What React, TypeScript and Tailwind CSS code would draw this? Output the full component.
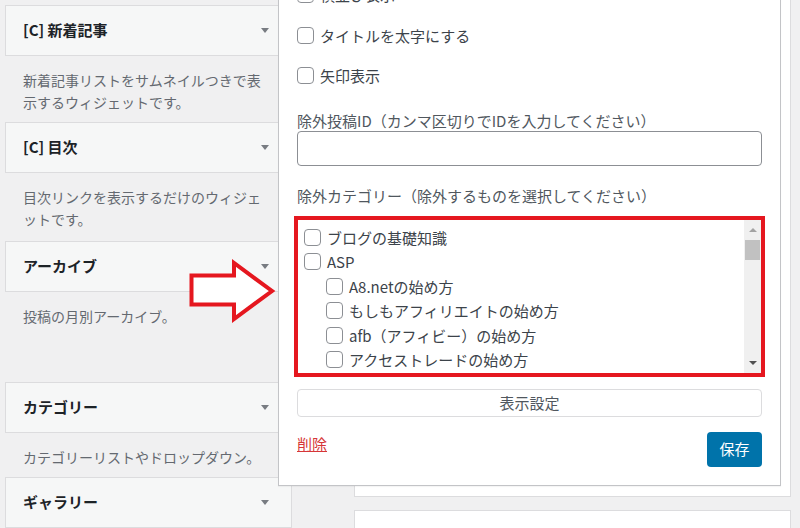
import React from 'react';

// Left column widgets (legacy widget screen)
const WIDGETS = [
    { title: '[C] 新着記事', desc: ['新着記事リストをサムネイルつきで表', '示するウィジェットです。'], descH: 'h-[66px]' },
    { title: '[C] 目次', desc: ['目次リンクを表示するだけのウィジェ', 'ットです。'], descH: 'h-[68px]' },
    { title: 'アーカイブ', desc: ['投稿の月別アーカイブ。'], descH: 'h-[90px]' },
    { title: 'カテゴリー', desc: ['カテゴリーリストやドロップダウン。'], descH: 'h-[44px]' },
    { title: 'ギャラリー', desc: [], descH: 'h-0' },
];

const CATEGORIES = [
    { label: 'ブログの基礎知識', depth: 0 },
    { label: 'ASP', depth: 0 },
    { label: 'A8.netの始め方', depth: 1 },
    { label: 'もしもアフィリエイトの始め方', depth: 1 },
    { label: 'afb（アフィビー）の始め方', depth: 1 },
    { label: 'アクセストレードの始め方', depth: 1 },
];

const Check = () => (
    <span className="inline-block w-[17px] h-[17px] shrink-0 rounded-[4px] border border-[#8c8f94] bg-white" />
);

const CheckRow = ({ label, className = '' }: { label: string; className?: string }) => (
    <div className={`flex items-center gap-[6px] h-[22px] ${className}`}>
        <Check />
        <span className="text-[15px] text-[#3c434a] leading-none">{label}</span>
    </div>
);

export default function App() {
    return (
        <div
            className="relative w-[800px] h-[528px] overflow-hidden bg-[#f0f0f1]"
            style={{ fontFamily: '"Noto Sans CJK JP", "Noto Sans", sans-serif' }}
        >
            <div className="flex">
                {/* Available widgets */}
                <div className="ml-[5px] mt-[5px] w-[287px] shrink-0">
                    {WIDGETS.map((w) => (
                        <div key={w.title}>
                            <div className="h-[51px] flex items-center justify-between pl-[17px] pr-[22px] bg-[#f6f7f7] border border-[#dcdcde]">
                                <span className="text-[15px] font-semibold text-[#1d2327]">{w.title}</span>
                                <span className="w-0 h-0 border-x-[4px] border-t-[5px] border-x-transparent border-t-[#787c82]" />
                            </div>
                            <div className={`${w.descH} pl-[18px] pt-[13px] text-[14px] leading-[22px] text-[#646970]`}>
                                {w.desc.map((line) => (
                                    <div key={line}>{line}</div>
                                ))}
                            </div>
                        </div>
                    ))}
                </div>

                {/* Sidebar areas */}
                <div className="ml-[62px] w-[437px] shrink-0">
                    <div className="-mt-px h-[498px] bg-white border border-[#dcdcde]" />
                    <div className="mt-[13px] h-[40px] bg-white border border-[#dcdcde]" />
                </div>
            </div>

            {/* Opened widget settings */}
            <div className="absolute left-[278px] -top-px w-[503px] h-[487px] bg-white border border-[#c3c4c7] shadow-[0_1px_1px_rgba(0,0,0,0.04)] px-[18px]">
                <div className="-mt-[17px]">
                    <CheckRow label="横並び表示" />
                    <CheckRow label="タイトルを太字にする" className="mt-[19px]" />
                    <CheckRow label="矢印表示" className="mt-[18px]" />

                    <div className="mt-[25px] h-[20px] flex items-center text-[15px] text-[#50575e]">
                        除外投稿ID（カンマ区切りでIDを入力してください）
                    </div>
                    <div className="h-[35px] rounded-[4px] border border-[#8c8f94] bg-white" />

                    <div className="mt-[20px] h-[20px] flex items-center text-[15px] text-[#50575e]">
                        除外カテゴリー（除外するものを選択してください）
                    </div>

                    {/* Category checklist, marked up with a red frame */}
                    <div className="mt-[10px] -mx-[3px] h-[161px] border-4 border-[#e5171f] flex bg-white">
                        <div className="flex-1 overflow-hidden pl-[6px] pt-[5px]">
                            {CATEGORIES.map((c) => (
                                <div
                                    key={c.label}
                                    className={`flex items-center gap-[6px] h-[24.5px] ${c.depth ? 'pl-[22px]' : ''}`}
                                >
                                    <Check />
                                    <span className="text-[15px] text-[#3c434a] leading-none">{c.label}</span>
                                </div>
                            ))}
                        </div>
                        <div className="w-[17px] bg-[#f0f0f0] flex flex-col items-center">
                            <div className="h-[20px] flex items-center">
                                <span className="w-0 h-0 border-x-[4px] border-b-[4px] border-x-transparent border-b-[#a3a3a3]" />
                            </div>
                            <div className="w-[15px] h-[20px] bg-[#c1c1c1]" />
                            <div className="flex-1" />
                            <div className="h-[20px] flex items-center">
                                <span className="w-0 h-0 border-x-[4px] border-t-[4px] border-x-transparent border-t-[#505050]" />
                            </div>
                        </div>
                    </div>

                    <button className="mt-[12px] w-full h-[28px] rounded-[4px] border border-[#dcdcde] bg-white text-[15px] text-[#50575e] flex items-center justify-center">
                        表示設定
                    </button>

                    <div className="mt-[15px] flex items-start justify-between">
                        <a className="text-[15px] leading-[24px] text-[#d63638] underline">削除</a>
                        <button className="w-[55px] h-[35px] rounded-[4px] bg-[#0073aa] text-white text-[15px]">
                            保存
                        </button>
                    </div>
                </div>
            </div>

            {/* Annotation arrow */}
            <svg className="absolute left-[180px] top-[250px]" width="100" height="80" viewBox="0 0 100 80">
                <polygon
                    points="11.5,25.5 54,25.5 54,13 92,41 54,69 54,54.5 11.5,54.5"
                    fill="#fff"
                    stroke="#e5171f"
                    strokeWidth="4"
                    strokeLinejoin="miter"
                />
            </svg>
        </div>
    );
}
